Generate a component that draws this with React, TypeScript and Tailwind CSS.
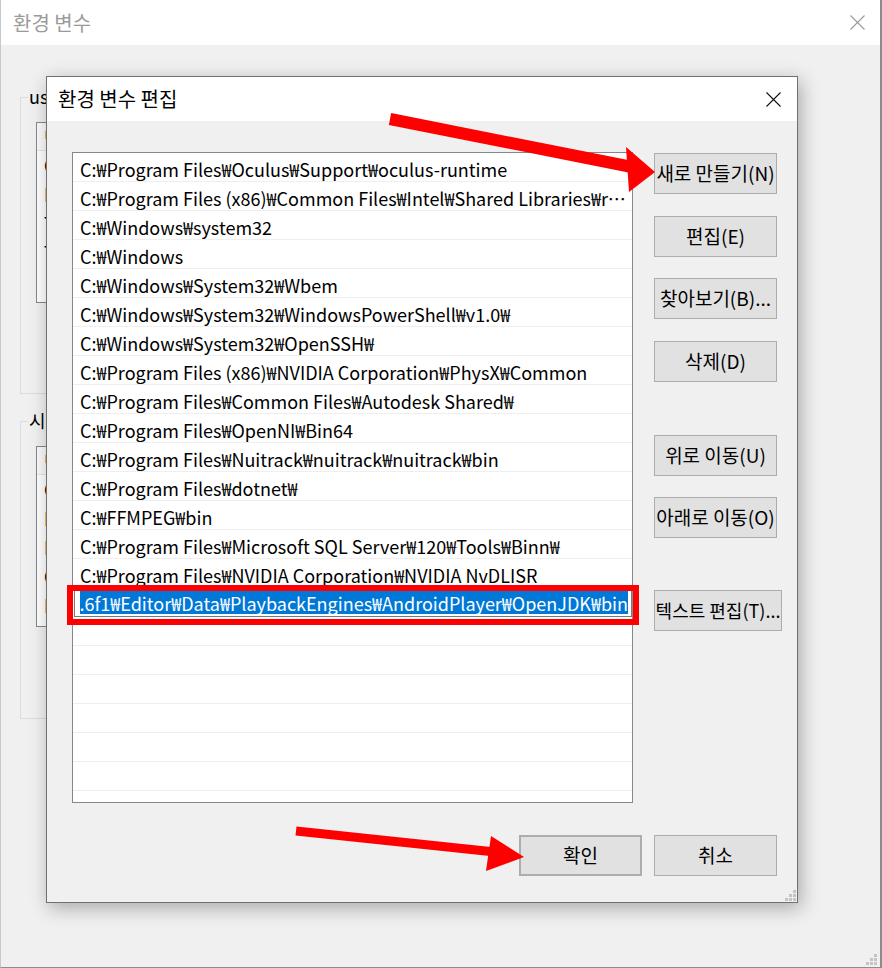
import React from "react";

const rows = [
  "C:₩Program Files₩Oculus₩Support₩oculus-runtime",
  "C:₩Program Files (x86)₩Common Files₩Intel₩Shared Libraries₩redist₩intel64₩compiler",
  "C:₩Windows₩system32",
  "C:₩Windows",
  "C:₩Windows₩System32₩Wbem",
  "C:₩Windows₩System32₩WindowsPowerShell₩v1.0₩",
  "C:₩Windows₩System32₩OpenSSH₩",
  "C:₩Program Files (x86)₩NVIDIA Corporation₩PhysX₩Common",
  "C:₩Program Files₩Common Files₩Autodesk Shared₩",
  "C:₩Program Files₩OpenNI₩Bin64",
  "C:₩Program Files₩Nuitrack₩nuitrack₩nuitrack₩bin",
  "C:₩Program Files₩dotnet₩",
  "C:₩FFMPEG₩bin",
  "C:₩Program Files₩Microsoft SQL Server₩120₩Tools₩Binn₩",
  "C:₩Program Files₩NVIDIA Corporation₩NVIDIA NvDLISR",
];

const selected =
  "C:₩Program Files₩Unity₩Hub₩Editor₩2019.3.6f1₩Editor₩Data₩PlaybackEngines₩AndroidPlayer₩OpenJDK₩bin";

function Btn({ label, className = "" }: { label: string; className?: string }) {
  return (
    <div
      className={
        "h-[41px] bg-[#e1e1e1] border border-[#adadad] flex items-center justify-center text-black whitespace-nowrap " +
        className
      }
    >
      {label}
    </div>
  );
}

function Grip() {
  return (
    <svg width="11" height="11" viewBox="0 0 11 11">
      {[
        [8, 0],
        [4, 4],
        [8, 4],
        [0, 8],
        [4, 8],
        [8, 8],
      ].map(([x, y], i) => (
        <rect key={i} x={x} y={y} width="3" height="3" fill="#c4c4c4" />
      ))}
    </svg>
  );
}

function CloseX({ color, size = 15 }: { color: string; size?: number }) {
  return (
    <svg width={size} height={size} viewBox="0 0 15 15">
      <path d="M0.5 0.5 L14.5 14.5 M14.5 0.5 L0.5 14.5" stroke={color} strokeWidth="1.1" fill="none" />
    </svg>
  );
}

function BgList({ items }: { items: string[] }) {
  return (
    <div className="mt-[24px] ml-[15px] h-[181px] w-[600px] border border-[#828790] bg-white overflow-hidden">
      <div className="h-[28px] bg-[#fafafa] border-b border-[#e5e5e5] pl-[7px] text-[18px] leading-[28px] text-[#333]">변수</div>
      {items.map((t, i) => (
        <div key={i} className="h-[29px] pl-[7px] text-[18px] leading-[29px] text-black">
          {t}
        </div>
      ))}
    </div>
  );
}

export default function App() {
  return (
    <div className="relative w-[882px] h-[968px] overflow-hidden bg-[#f0f0f0] font-['Noto_Sans_CJK_KR',sans-serif]">
      {/* Background window */}
      <div className="w-[882px] h-[968px] border-l border-l-[#c8c8c8] border-r-[2px] border-r-[#8c8c8c] border-b border-b-[#8c8c8c] flex flex-col">
        <div className="h-[45px] bg-white flex items-center justify-between pl-[12px] pr-[15px]">
          <span className="text-[20px] text-[#9a9a9a]">환경 변수</span>
          <CloseX color="#9a9a9a" />
        </div>
        <div className="flex-1 pl-[19px] pt-[52px] relative">
          <div className="relative w-[700px] h-[297px] border border-[#dcdcdc]">
            <span className="absolute -top-[15px] left-[7px] bg-[#f0f0f0] px-[1px] text-[18px] leading-[26px] text-black">
              user에 대한 사용자 변수(U)
            </span>
            <BgList items={["OneDrive", "Path", "TEMP", "TMP"]} />
          </div>
          <div className="relative mt-[27px] w-[700px] h-[298px] border border-[#dcdcdc]">
            <span className="absolute -top-[15px] left-[7px] bg-[#f0f0f0] px-[1px] text-[18px] leading-[26px] text-black">
              시스템 변수(S)
            </span>
            <BgList items={["ComSpec", "DriverData", "NUMBER_OF_PROCESSORS", "OS", "Path"]} />
          </div>
          <div className="absolute right-[3px] bottom-[2px]">
            <Grip />
          </div>
        </div>
      </div>

      {/* Edit dialog */}
      <div className="absolute left-[46px] top-[76px] w-[752px] h-[827px] border border-[#707070] bg-[#f0f0f0] shadow-[3px_5px_18px_rgba(0,0,0,0.3)] flex flex-col">
        <div className="h-[44px] bg-white flex items-center justify-between pl-[11px] pr-[16px]">
          <span className="text-[20px] text-black">환경 변수 편집</span>
          <CloseX color="#111" />
        </div>
        <div className="relative flex-1 flex flex-col pl-[25px] pt-[31px] pr-[20px]">
          <div className="flex gap-[21px]">
            <div className="w-[561px] h-[651px] border border-[#828790] bg-white overflow-hidden flex flex-col">
              {rows.map((t, i) => (
                <div
                  key={i}
                  className="h-[29px] shrink-0 border-b border-[#efefef] pl-[7px] pr-[2px] pt-[4px] text-[18px] leading-[24px] text-black whitespace-nowrap overflow-hidden text-ellipsis"
                >
                  {t}
                </div>
              ))}
              <div className="h-[29px] shrink-0 flex pl-[1px] pr-0">
                <div className="flex-1 min-w-0 border border-[#7a7a7a] bg-white py-[2px] pl-[5px] pr-[3px]">
                  <div className="h-full bg-[#0078d7] text-white text-[18px] pt-[2px] flex items-center justify-end overflow-hidden whitespace-nowrap">
                    <span className="shrink-0">{selected}</span>
                  </div>
                </div>
              </div>
              {Array.from({ length: 6 }).map((_, i) => (
                <div key={i} className="h-[29px] shrink-0 border-b border-[#efefef]" />
              ))}
            </div>
            <div className="w-[123px] flex flex-col">
              <Btn label="새로 만들기(N)" className="mt-[1px] w-[123px] text-[19px]" />
              <Btn label="편집(E)" className="mt-[22px] w-[123px] text-[19px]" />
              <Btn label="찾아보기(B)..." className="mt-[21px] w-[123px] text-[19px]" />
              <Btn label="삭제(D)" className="mt-[22px] w-[123px] text-[19px]" />
              <Btn label="위로 이동(U)" className="mt-[53px] w-[123px] text-[19px]" />
              <Btn label="아래로 이동(O)" className="mt-[21px] w-[123px] text-[19px]" />
              <Btn label="텍스트 편집(T)..." className="mt-[52px] w-[128px] text-[18px]" />
            </div>
          </div>
          <div className="flex justify-end gap-[12px] mt-[32px]">
            <Btn label="확인" className="w-[123px] border-2 border-[#0078d7] text-[19px]" />
            <Btn label="취소" className="w-[123px] text-[19px]" />
          </div>
          <div className="absolute right-[1px] bottom-[1px]">
            <Grip />
          </div>
        </div>
      </div>

      {/* Red highlight box */}
      <div className="absolute left-[67px] top-[585px] w-[572px] h-[40px] border-[6px] border-[#ff0000]" />

      {/* Arrows */}
      <svg className="absolute inset-0 pointer-events-none" width="882" height="968" viewBox="0 0 882 968">
        <line x1="390" y1="119" x2="632" y2="167" stroke="#ff0000" strokeWidth="12" />
        <polygon points="626,147 655,172 629,192" fill="#ff0000" />
        <line x1="296" y1="831" x2="495" y2="852" stroke="#ff0000" strokeWidth="9" />
        <polygon points="491,836 524,857 486,871" fill="#ff0000" />
      </svg>
    </div>
  );
}
